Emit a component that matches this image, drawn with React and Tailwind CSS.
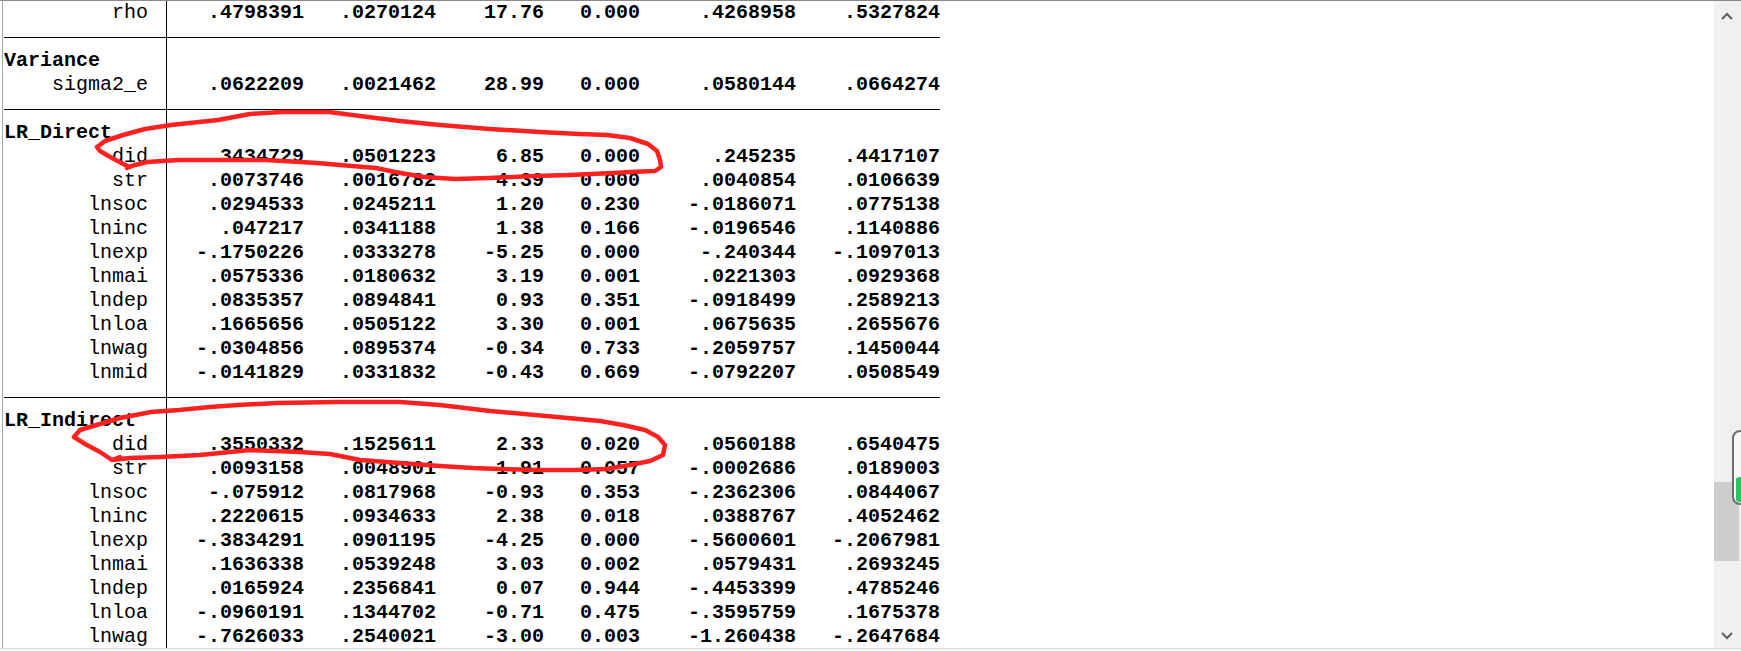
import React from "react";

const mono = { fontFamily: '"Liberation Mono", "Courier New", monospace' };

const rows = [
  { name: "rho", v: [".4798391", ".0270124", "17.76", "0.000", ".4268958", ".5327824"] },
  { sep: true },
  { head: "Variance" },
  { name: "sigma2_e", v: [".0622209", ".0021462", "28.99", "0.000", ".0580144", ".0664274"] },
  { sep: true },
  { head: "LR_Direct" },
  { name: "did", v: [".3434729", ".0501223", "6.85", "0.000", ".245235", ".4417107"] },
  { name: "str", v: [".0073746", ".0016782", "4.39", "0.000", ".0040854", ".0106639"] },
  { name: "lnsoc", v: [".0294533", ".0245211", "1.20", "0.230", "-.0186071", ".0775138"] },
  { name: "lninc", v: [".047217", ".0341188", "1.38", "0.166", "-.0196546", ".1140886"] },
  { name: "lnexp", v: ["-.1750226", ".0333278", "-5.25", "0.000", "-.240344", "-.1097013"] },
  { name: "lnmai", v: [".0575336", ".0180632", "3.19", "0.001", ".0221303", ".0929368"] },
  { name: "lndep", v: [".0835357", ".0894841", "0.93", "0.351", "-.0918499", ".2589213"] },
  { name: "lnloa", v: [".1665656", ".0505122", "3.30", "0.001", ".0675635", ".2655676"] },
  { name: "lnwag", v: ["-.0304856", ".0895374", "-0.34", "0.733", "-.2059757", ".1450044"] },
  { name: "lnmid", v: ["-.0141829", ".0331832", "-0.43", "0.669", "-.0792207", ".0508549"] },
  { sep: true },
  { head: "LR_Indirect" },
  { name: "did", v: [".3550332", ".1525611", "2.33", "0.020", ".0560188", ".6540475"] },
  { name: "str", v: [".0093158", ".0048901", "1.91", "0.057", "-.0002686", ".0189003"] },
  { name: "lnsoc", v: ["-.075912", ".0817968", "-0.93", "0.353", "-.2362306", ".0844067"] },
  { name: "lninc", v: [".2220615", ".0934633", "2.38", "0.018", ".0388767", ".4052462"] },
  { name: "lnexp", v: ["-.3834291", ".0901195", "-4.25", "0.000", "-.5600601", "-.2067981"] },
  { name: "lnmai", v: [".1636338", ".0539248", "3.03", "0.002", ".0579431", ".2693245"] },
  { name: "lndep", v: [".0165924", ".2356841", "0.07", "0.944", "-.4453399", ".4785246"] },
  { name: "lnloa", v: ["-.0960191", ".1344702", "-0.71", "0.475", "-.3595759", ".1675378"] },
  { name: "lnwag", v: ["-.7626033", ".2540021", "-3.00", "0.003", "-1.260438", "-.2647684"] },
];

// Stata column widths after the "|"
const widths = [11, 11, 9, 8, 13, 12];
const fmt = (v) => v.map((x, i) => x.padStart(widths[i])).join("");

const Bar = () => (
  <>
    <div className="w-[18px]" />
    <div className="w-px bg-black" />
    <div className="w-[5px]" />
  </>
);

const Row = ({ row }) => {
  if (row.sep) {
    return (
      <div className="flex h-6 items-center">
        <div className="w-[162px] h-px bg-black" />
        <div className="w-px h-6 bg-black" />
        <div className="w-[773px] h-px bg-black" />
      </div>
    );
  }
  if (row.head) {
    return (
      <div className="flex h-6">
        <span className="w-[144px] font-bold whitespace-pre">{row.head}</span>
        <Bar />
      </div>
    );
  }
  return (
    <div className="flex h-6">
      <span className="w-[144px] text-right whitespace-pre">{row.name}</span>
      <Bar />
      <span className="font-bold whitespace-pre">{fmt(row.v)}</span>
    </div>
  );
};

const loop1 =
  "129,167 112,158 100,151 97,147 105,141 123,135 145,129 171,125 218,120 250,114 281,112 329,112 360,116 400,121 440,125 490,129 540,132 580,134 607,135 630,138 648,144 657,151 660,160 661,167 655,171 630,172 613,173 570,175 534,176 490,178 455,179 424,177 395,172 376,168 340,165 317,163 266,160 220,160 179,160 147,162 135,165 127,168 134,165";
const loop2 =
  "112,460 100,452 85,444 74,437 80,430 100,424 120,418 151,412 179,410 210,407 238,405 277,403 337,402 400,402 440,405 490,411 557,417 600,421 623,425 645,430 658,437 665,445 663,455 650,461 630,465 607,469 575,470 540,470 500,469 473,468 440,466 400,463 360,460 330,454 300,452 250,450 220,453 200,455 160,457 130,458 112,460 120,457";

export default function App() {
  return (
    <div className="relative w-[1741px] h-[651px] overflow-hidden bg-white text-black flex flex-col">
      <div className="h-px bg-[#8a8a8a]" />
      <div className="flex h-[647px]">
        <div className="flex-1 flex overflow-hidden">
          <div className="w-[2px]" />
          <div className="w-px bg-[#a8a8a8]" />
          <div className="w-px" />
          <div className="flex flex-col text-[20px] leading-6" style={mono}>
            {rows.map((r, i) => (
              <Row key={i} row={r} />
            ))}
          </div>
        </div>
        <div className="w-[27px] bg-[#f0f0f0] flex flex-col">
          <div className="h-[30px] flex items-center justify-center pr-[2px]">
            <svg width="12" height="8" viewBox="0 0 12 8">
              <polyline points="1,7 6,2 11,7" fill="none" stroke="#606060" strokeWidth="2" />
            </svg>
          </div>
          <div className="h-[451px]" />
          <div className="h-[79px] w-[25px] bg-[#cdcdcd]" />
          <div className="flex-1" />
          <div className="h-[24px] flex items-center justify-center pr-[2px]">
            <svg width="12" height="8" viewBox="0 0 12 8">
              <polyline points="1,1 6,6 11,1" fill="none" stroke="#606060" strokeWidth="2" />
            </svg>
          </div>
        </div>
      </div>
      <div className="h-px bg-[#dedede]" />
      <div className="h-[2px] bg-[#f4f4f4]" />

      {/* hand-drawn red marks */}
      <svg className="absolute left-0 top-0 pointer-events-none" width="1741" height="651">
        <polyline points={loop1} fill="none" stroke="#ff2020" strokeWidth="4.5" strokeLinejoin="round" strokeLinecap="round" />
        <polyline points={loop2} fill="none" stroke="#ff2020" strokeWidth="4.5" strokeLinejoin="round" strokeLinecap="round" />
      </svg>

      {/* floating side widget */}
      <div className="absolute left-[1732px] top-[430px] w-[18px] h-[75px] rounded-[8px] border-[2.5px] border-[#6e6e6e] bg-[#f7f7f7]" />
      <div className="absolute left-[1736px] top-[477px] w-[6px] h-[25px] rounded-full bg-[#2bc463]" />
    </div>
  );
}
